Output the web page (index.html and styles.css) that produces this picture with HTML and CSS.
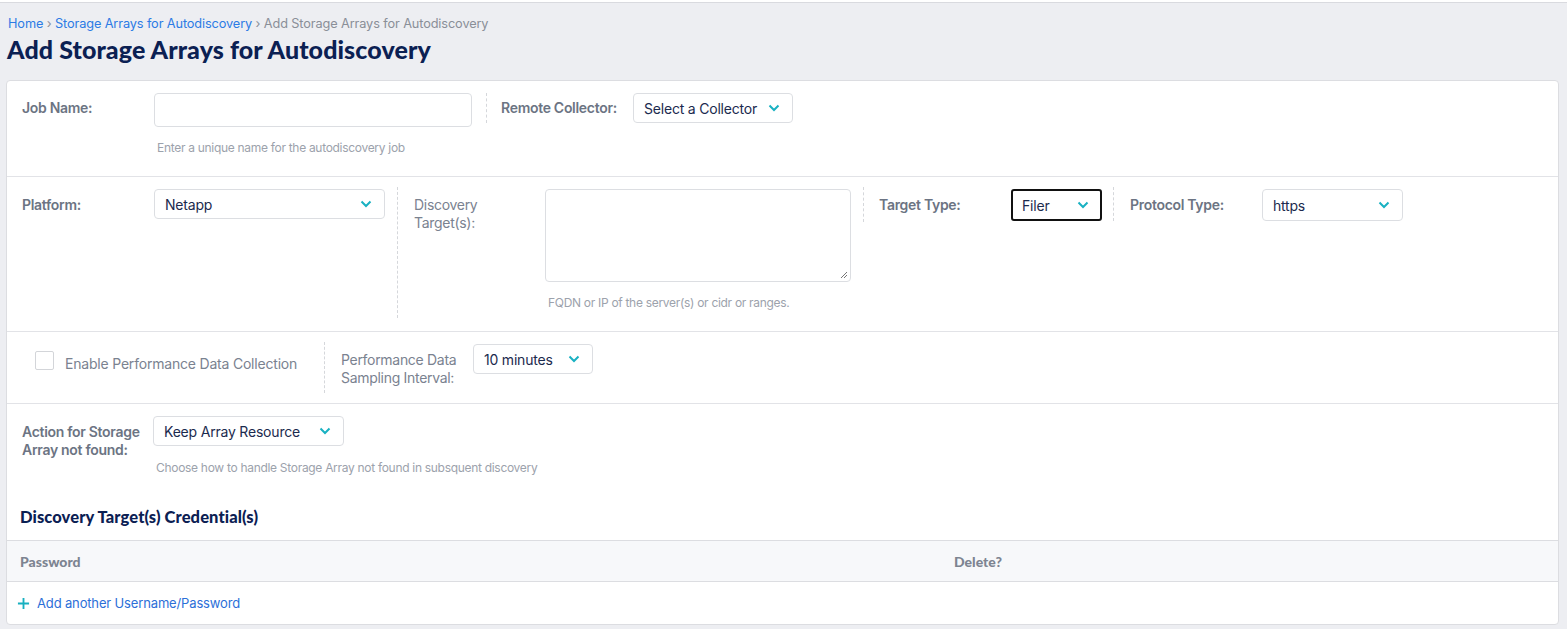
FILE: index.html
```html
<!DOCTYPE html>
<html>
<head>
<meta charset="utf-8">
<link rel="stylesheet" href="styles.css">
</head>
<body>
<div class="page">
  <div class="crumbs"><a class="crumb-link">Home</a> › <a class="crumb-link">Storage Arrays for Autodiscovery</a> › <span>Add Storage Arrays for Autodiscovery</span></div>
  <h1 class="title">Add Storage Arrays for Autodiscovery</h1>

  <div class="card">
    <div class="row row-1">
      <div class="field">
        <div class="label strong">Job Name:</div>
        <div class="control">
          <div class="input input-job"></div>
          <div class="hint">Enter a unique name for the autodiscovery job</div>
        </div>
      </div>
      <div class="field divided">
        <div class="label strong">Remote Collector:</div>
        <div class="control">
          <div class="select sel-collector"><span>Select a Collector</span><svg class="chev" viewBox="0 0 12 8"><path d="M1.5 1.5 L6 6 L10.5 1.5" /></svg></div>
        </div>
      </div>
    </div>

    <div class="row row-2">
      <div class="field f-platform">
        <div class="label strong">Platform:</div>
        <div class="control">
          <div class="select sel-platform"><span>Netapp</span><svg class="chev" viewBox="0 0 12 8"><path d="M1.5 1.5 L6 6 L10.5 1.5" /></svg></div>
        </div>
      </div>
      <div class="field divided f-targets">
        <div class="label label-131">Discovery<br>Target(s):</div>
        <div class="control">
          <div class="textarea"><svg class="grip" viewBox="0 0 8 8"><path d="M7 1 L1 7 M7 4 L4 7" /></svg></div>
          <div class="hint hint-targets">FQDN or IP of the server(s) or cidr or ranges.</div>
        </div>
      </div>
      <div class="field divided f-type">
        <div class="label strong">Target Type:</div>
        <div class="control">
          <div class="select sel-filer focused"><span>Filer</span><svg class="chev" viewBox="0 0 12 8"><path d="M1.5 1.5 L6 6 L10.5 1.5" /></svg></div>
        </div>
      </div>
      <div class="field divided f-proto">
        <div class="label strong">Protocol Type:</div>
        <div class="control">
          <div class="select sel-proto"><span>https</span><svg class="chev" viewBox="0 0 12 8"><path d="M1.5 1.5 L6 6 L10.5 1.5" /></svg></div>
        </div>
      </div>
    </div>

    <div class="row row-3">
      <div class="field f-check">
        <span class="checkbox"></span>
        <span class="check-text">Enable Performance Data Collection</span>
      </div>
      <div class="field divided f-interval">
        <div class="label">Performance Data<br>Sampling Interval:</div>
        <div class="control">
          <div class="select sel-interval"><span>10 minutes</span><svg class="chev" viewBox="0 0 12 8"><path d="M1.5 1.5 L6 6 L10.5 1.5" /></svg></div>
        </div>
      </div>
    </div>

    <div class="row row-4">
      <div class="field">
        <div class="label strong label-131">Action for Storage<br>Array not found:</div>
        <div class="control">
          <div class="select sel-action"><span>Keep Array Resource</span><svg class="chev" viewBox="0 0 12 8"><path d="M1.5 1.5 L6 6 L10.5 1.5" /></svg></div>
          <div class="hint hint-action">Choose how to handle Storage Array not found in subsquent discovery</div>
        </div>
      </div>
    </div>

    <h2 class="sub-title">Discovery Target(s) Credential(s)</h2>
    <div class="table">
      <div class="thead">
        <div class="th th-pass">Password</div>
        <div class="th">Delete?</div>
      </div>
      <div class="tfoot">
        <a class="add-link"><svg class="plus" viewBox="0 0 14 14"><path d="M7 1 V13 M1 7 H13" /></svg>Add another Username/Password</a>
      </div>
    </div>
  </div>
</div>
</body>
</html>
```

FILE: styles.css
```css
* { box-sizing: border-box; }
html, body { margin: 0; padding: 0; background: #ffffff; }
body { padding-top: 2px; font-family: Inter, "Noto Sans", sans-serif; }

.page {
  background: #edeef2;
  border-top: 1px solid #d9dadf;
  padding: 12px 8px 5px 6px;
  min-height: 627px;
}

.crumbs {
  font-size: 12.75px;
  color: #8a8f98;
  padding-left: 2px;
  line-height: 17px;
  letter-spacing: -0.12px;
}
.crumb-link { color: #2c7be5; }

.title {
  margin: 1px 0 0 1px;
  font-family: Lato, "Open Sans", sans-serif;
  font-weight: 900;
  font-size: 25px;
  line-height: 32px;
  color: #0b2053;
  letter-spacing: 0.1px;
}

.card {
  margin-top: 15px;
  background: #fff;
  border: 1px solid #dcdde1;
  border-radius: 4px;
  overflow: hidden;
}

.row {
  display: flex;
  align-items: flex-start;
  padding: 0 15px;
  border-bottom: 1px solid #e2e3e7;
}
.row-1 { padding-top: 12px; padding-bottom: 21px; }
.row-2 { padding-top: 10px; padding-bottom: 13px; }
.row-3 { padding-top: 10px; padding-bottom: 10px; }
.row-4 { padding-top: 12px; padding-bottom: 0; border-bottom: none; }

.field {
  display: flex;
  align-items: flex-start;
  padding-right: 14px;
}
.field.divided {
  border-left: 1px dashed #d5d7db;
  padding-left: 14px;
}

.label {
  width: 132px;
  flex: none;
  font-size: 14px;
  line-height: 18px;
  color: #7a8290;
  padding-top: 6px;
  letter-spacing: -0.3px;
}
.label.strong { font-weight: 600; color: #6c7483; }
.label-131 { width: 131px; }

.control { display: flex; flex-direction: column; }

.input {
  width: 318px;
  height: 34px;
  border: 1px solid #dcdee2;
  border-radius: 4px;
}
.hint {
  font-size: 12px;
  color: #9ca2ac;
  margin-top: 13px;
  padding-left: 3px;
  letter-spacing: -0.3px;
  line-height: 15px;
}

.select {
  display: flex;
  align-items: center;
  justify-content: space-between;
  height: 30px;
  border: 1px solid #dcdee2;
  border-radius: 4px;
  padding: 0 12px 0 10px;
  font-size: 14px;
  color: #1b2a4e;
  letter-spacing: -0.2px;
}
.chev {
  width: 12px;
  height: 8px;
  fill: none;
  stroke: #19b1c2;
  stroke-width: 2;
}
.sel-collector { width: 160px; }

.row-2 .control { padding-top: 2px; }
.row-2 .label { padding-top: 9px; }
.field.f-platform { padding-right: 12px; }
.sel-platform { width: 231px; }
.field.f-targets { padding-left: 16px; padding-right: 12px; padding-bottom: 8px; }
.textarea {
  position: relative;
  width: 306px;
  height: 93px;
  border: 1px solid #dcdee2;
  border-radius: 4px;
}
.grip {
  position: absolute;
  right: 2px;
  bottom: 2px;
  width: 8px;
  height: 8px;
  stroke: #777;
  stroke-width: 1;
}
.hint-targets { margin-top: 13px; }
.field.f-type { padding-left: 15px; padding-right: 11px; padding-bottom: 1px; }
.sel-filer { width: 91px; height: 32px; }
.focused { border: 2px solid #111; border-radius: 3px; padding-left: 9px; padding-right: 11px; }
.field.f-proto { padding-left: 16px; }
.sel-proto { width: 141px; height: 32px; }

.field.f-check {
  align-items: center;
  width: 302px;
  padding-left: 13px;
  padding-top: 1px;
  height: 36px;
}
.checkbox {
  width: 19px;
  height: 19px;
  border: 1px solid #d3d5d9;
  border-radius: 2px;
  margin-right: 11px;
  flex: none;
}
.check-text {
  font-size: 14px;
  color: #7a8290;
  letter-spacing: -0.2px;
  padding-top: 5px;
}
.field.f-interval { padding-left: 16px; min-height: 51px; }
.f-interval .label { padding-top: 9px; }
.f-interval .control { padding-top: 2px; }
.sel-interval { width: 120px; }

.row-4 .control { padding-top: 0; }
.row-4 .label { padding-top: 7px; }
.sel-action { width: 191px; }
.hint-action { margin-top: 14px; }

.sub-title {
  margin: 32px 0 0 13px;
  font-family: Lato, "Open Sans", sans-serif;
  font-weight: 900;
  font-size: 16.5px;
  line-height: 20px;
  color: #0b2053;
  letter-spacing: 0.1px;
}

.table { margin-top: 13px; }
.thead {
  display: grid;
  grid-template-columns: 934px 1fr;
  height: 42px;
  align-items: center;
  background: #f7f8fa;
  border-top: 1px solid #dcdde1;
  border-bottom: 1px solid #dcdde1;
  padding-left: 13px;
}
.th {
  font-family: Lato, "Open Sans", sans-serif;
  font-weight: 900;
  font-size: 14px;
  color: #7d8491;
}
.tfoot {
  height: 42px;
  display: flex;
  align-items: center;
  padding-left: 10px;
}
.add-link {
  display: flex;
  align-items: center;
  font-size: 13px;
  color: #2c6fd8;
  letter-spacing: -0.15px;
}
.plus {
  width: 13px;
  height: 13px;
  stroke: #18b0c0;
  stroke-width: 2;
  margin-right: 7px;
}
```
